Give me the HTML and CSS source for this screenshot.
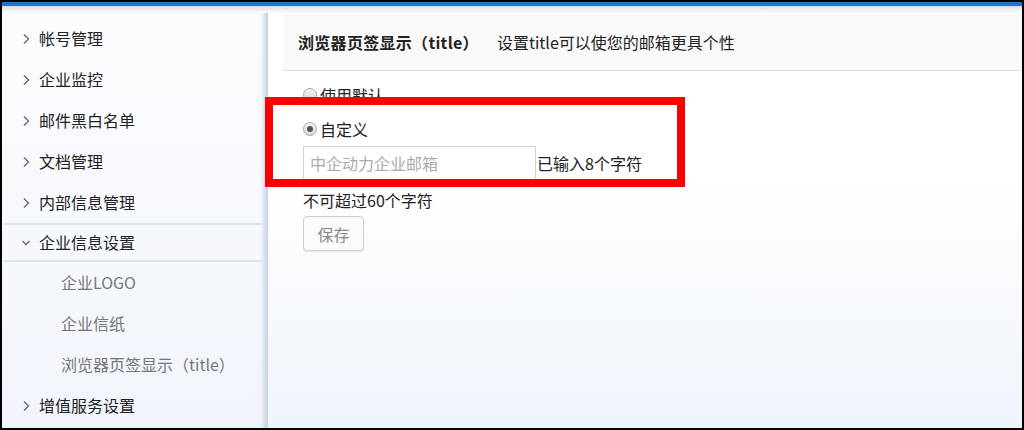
FILE: index.html
```html
<!DOCTYPE html>
<html lang="zh-CN">
<head>
  <meta charset="UTF-8">
  <title>企业信息设置</title>
  <link rel="stylesheet" href="styles.css">
</head>
<body>

  <div class="frame">
    <div class="topbar"></div>
    <div class="layout">

      <ul class="sidebar">
        <li class="nav-item"><svg class="chev" viewBox="0 0 8 12"><polyline points="2,1.5 6.5,6 2,10.5"/></svg>帐号管理</li>
        <li class="nav-item"><svg class="chev" viewBox="0 0 8 12"><polyline points="2,1.5 6.5,6 2,10.5"/></svg>企业监控</li>
        <li class="nav-item"><svg class="chev" viewBox="0 0 8 12"><polyline points="2,1.5 6.5,6 2,10.5"/></svg>邮件黑白名单</li>
        <li class="nav-item"><svg class="chev" viewBox="0 0 8 12"><polyline points="2,1.5 6.5,6 2,10.5"/></svg>文档管理</li>
        <li class="nav-item"><svg class="chev" viewBox="0 0 8 12"><polyline points="2,1.5 6.5,6 2,10.5"/></svg>内部信息管理</li>
        <li class="nav-item open"><svg class="chev" viewBox="0 0 8 12"><polyline points="0.5,4 4,7.5 7.5,4"/></svg>企业信息设置</li>
        <li class="sub-item">企业LOGO</li>
        <li class="sub-item">企业信纸</li>
        <li class="sub-item">浏览器页签显示（title）</li>
        <li class="nav-item"><svg class="chev" viewBox="0 0 8 12"><polyline points="2,1.5 6.5,6 2,10.5"/></svg>增值服务设置</li>
      </ul>

      <div class="main">
        <div class="page-head">
          <span class="page-title">浏览器页签显示（title）</span>
          <span class="page-desc">设置title可以使您的邮箱更具个性</span>
        </div>

        <div class="content">
          <label class="radio-row"><span class="radio"></span>使用默认</label>
          <label class="radio-row"><span class="radio checked"></span>自定义</label>
          <div class="input-row">
            <input class="title-input" type="text" placeholder="中企动力企业邮箱">
            <span class="count">已输入8个字符</span>
          </div>
          <p class="hint">不可超过60个字符</p>
          <button class="save-btn">保存</button>

          <!-- annotation box drawn over the form -->
          <div class="highlight"></div>
        </div>
      </div>

    </div>
  </div>

</body>
</html>
```

FILE: styles.css
```css
* {
  box-sizing: border-box;
}
body {
  margin: 0;
  font-family: "Noto Sans CJK SC", "Noto Sans", sans-serif;
  font-size: 16px;
  color: #222;
  background: #fff;
}
.frame {
  width: 1024px;
  height: 430px;
  border: 2px solid #000;
  display: flex;
  flex-direction: column;
  overflow: hidden;
}
.topbar {
  height: 11px;
  flex-shrink: 0;
  border-top: 4px solid #1d78cc;
  background: linear-gradient(#d4dbe0, #eef1f3 60%, #fbfbfb);
}
.layout {
  flex: 1;
  display: flex;
  min-height: 0;
}

/* sidebar */
.sidebar {
  list-style: none;
  margin: 0;
  padding: 5px 0 0 0;
  width: 266px;
  flex-shrink: 0;
  background: linear-gradient(#fbfcfe, #f1f5fb);
  box-shadow: inset -7px 0 5px -3px #c6d2e0;
}
.nav-item {
  height: 41px;
  line-height: 41px;
  padding-left: 20px;
  color: #222;
  display: flex;
  align-items: center;
  white-space: nowrap;
}
.nav-item.open {
  height: 39px;
  margin: 0 4px 0 2px;
  padding-left: 18px;
  border-top: 2px solid #dbe3ee;
  border-bottom: 2px solid #dbe3ee;
}
.chev {
  width: 8px;
  height: 12px;
  margin-right: 9px;
  fill: none;
  stroke: #666;
  stroke-width: 1.3;
}
.sub-item {
  height: 41px;
  line-height: 41px;
  padding-left: 59px;
  color: #777;
  white-space: nowrap;
}

/* main */
.main {
  flex: 1;
  padding-left: 15px;
  background: linear-gradient(#fff 40%, #eef4fb);
}
.page-head {
  height: 57px;
  margin-top: 1px;
  padding-left: 15px;
  display: flex;
  align-items: center;
  background: #f9f9f9;
  border-bottom: 1px solid #e3e3e3;
}
.page-title {
  font-weight: bold;
  margin-right: 18px;
  letter-spacing: 0.3px;
}
.page-desc {
  color: #222;
}
.content {
  position: relative;
  padding: 7px 0 0 20px;
}
.radio-row {
  display: flex;
  align-items: center;
  height: 34px;
}
.radio {
  width: 14px;
  height: 14px;
  margin-right: 3px;
  border: 1px solid #a9a9a9;
  border-radius: 50%;
  background: linear-gradient(#f4f4f4, #d6d6d6);
  display: flex;
  align-items: center;
  justify-content: center;
}
.radio.checked::after {
  content: "";
  width: 6px;
  height: 6px;
  border-radius: 50%;
  background: #555;
}
.input-row {
  display: flex;
  align-items: center;
  height: 34px;
}
.title-input {
  width: 233px;
  height: 34px;
  padding: 0 6px;
  border: 1px solid #d0d0d0;
  font-family: inherit;
  font-size: 16px;
  background: #fff;
  outline: none;
}
.title-input::placeholder {
  color: #aaa;
}
.count {
  margin-left: 1px;
}
.hint {
  margin: 4px 0 0 0;
  line-height: 32px;
}
.save-btn {
  width: 61px;
  height: 35px;
  border: 1px solid #cfcfcf;
  border-radius: 4px;
  background: #fbfbfb;
  color: #888;
  font-family: inherit;
  font-size: 16px;
  box-shadow: 0 1px 1px #e6e6e6;
}

/* red annotation frame */
.highlight {
  position: absolute;
  left: -18px;
  top: 26px;
  width: 420px;
  height: 90px;
  border: 8px solid #ff0000;
}
```
